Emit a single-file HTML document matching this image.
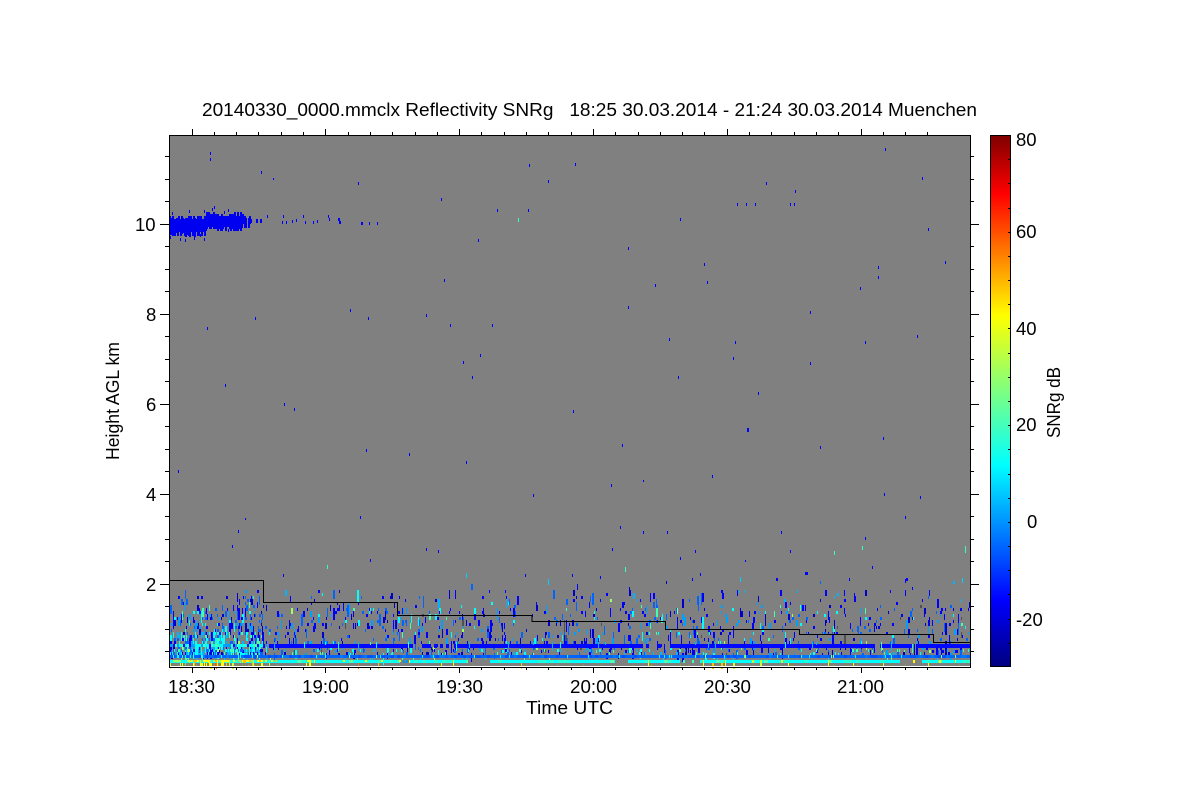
<!DOCTYPE html>
<html>
<head>
<meta charset="utf-8">
<title>20140330_0000.mmclx Reflectivity SNRg</title>
<style>
html,body{margin:0;padding:0;background:#fff;width:1200px;height:800px;overflow:hidden}
svg{display:block}
text{font-family:"Liberation Sans",sans-serif;font-size:18.5px;fill:#000;white-space:pre}
</style>
</head>
<body>
<svg id="s" xmlns="http://www.w3.org/2000/svg" width="1200" height="800" viewBox="0 0 1200 800">
<defs>
<linearGradient id="jet" x1="0" y1="1" x2="0" y2="0">
<stop offset="0" stop-color="#000080"/>
<stop offset="0.125" stop-color="#0000ff"/>
<stop offset="0.38" stop-color="#00ffff"/>
<stop offset="0.66" stop-color="#ffff00"/>
<stop offset="0.89" stop-color="#ff0000"/>
<stop offset="1" stop-color="#800000"/>
</linearGradient>
</defs>
<rect x="169" y="135" width="801" height="532" fill="#808080"/>
<g id="data" shape-rendering="crispEdges"></g>
<rect x="169" y="666" width="801" height="1" fill="#fff" shape-rendering="crispEdges"/>
<path d="M169 580.5H263.5V602.5H397.5V615.5H398M398 615.5H532V621.5H665.5V629.5H799.5V634.5H933.5V642.5H970" fill="none" stroke="#000" stroke-width="1" shape-rendering="crispEdges"/>
<g id="axes" shape-rendering="crispEdges"></g>
<rect x="990.5" y="135.5" width="20" height="531" fill="url(#jet)" stroke="#000" stroke-width="1" shape-rendering="crispEdges"/>
<g id="cb" shape-rendering="crispEdges"></g>

<text x="202" y="116" textLength="775" lengthAdjust="spacingAndGlyphs">20140330_0000.mmclx Reflectivity SNRg   18:25 30.03.2014 - 21:24 30.03.2014 Muenchen</text>

<text x="168" y="693" textLength="47" lengthAdjust="spacingAndGlyphs">18:30</text>
<text x="302" y="693" textLength="47" lengthAdjust="spacingAndGlyphs">19:00</text>
<text x="436" y="693" textLength="47" lengthAdjust="spacingAndGlyphs">19:30</text>
<text x="570" y="693" textLength="47" lengthAdjust="spacingAndGlyphs">20:00</text>
<text x="704" y="693" textLength="47" lengthAdjust="spacingAndGlyphs">20:30</text>
<text x="837" y="693" textLength="47" lengthAdjust="spacingAndGlyphs">21:00</text>
<text x="526" y="714" textLength="87" lengthAdjust="spacingAndGlyphs">Time UTC</text>

<text x="146" y="591">2</text>
<text x="146" y="501">4</text>
<text x="146" y="411">6</text>
<text x="146" y="321">8</text>
<text x="135" y="231">10</text>

<text x="1016" y="146">80</text>
<text x="1016" y="238">60</text>
<text x="1016" y="335">40</text>
<text x="1016" y="431">20</text>
<text x="1027" y="528">0</text>
<text x="1016" y="626">-20</text>

<text transform="translate(119 460) rotate(-90)" textLength="118" lengthAdjust="spacingAndGlyphs">Height AGL km</text>
<text transform="translate(1060 438) rotate(-90)" textLength="71" lengthAdjust="spacingAndGlyphs">SNRg dB</text>
</svg>
<script>
(function(){
var NS="http://www.w3.org/2000/svg",seed=12345;
function R(){seed=(seed*1664525+1013904223)>>>0;return seed/4294967296;}
var order=[],P={},L=0;
function layer(){L++;}
function add(c,x,y,w,h){
  x=Math.max(169,Math.round(x));w=Math.round(w)||1;
  if(x+w>970)w=970-x;if(w<=0)return;
  var k=L+"|"+c;
  if(!P[k]){P[k]="";order.push(k);}
  P[k]+="M"+x+" "+y+"h"+w+"v"+h+"h"+(-w)+"z";
}
function pick(t){var r=R(),a=0;for(var i=0;i<t.length;i++){a+=t[i][1];if(r<a)return t[i][0];}return t[0][0];}
var high=[["#0000ff",.42],["#0000c8",.2],["#0064ff",.2],["#00b4ff",.09],["#00ffff",.05],["#40ffb0",.03],["#a0ff60",.01]];
var mid=[["#0000ff",.34],["#0000c8",.16],["#0064ff",.22],["#00a0ff",.12],["#00ffff",.09],["#40ffb0",.04],["#a0ff60",.01],["#505050",.02]];
var lmid=[["#0000ff",.3],["#0000c8",.2],["#0064ff",.25],["#00a0ff",.15],["#00ffff",.08],["#40ffb0",.02]];
var dense=[["#00ffff",.26],["#0064ff",.22],["#0000ff",.16],["#00b4ff",.16],["#40ffb0",.12],["#0000c8",.06],["#a0ff60",.02]];

/* low-level speckle above the bands */
for(var x=170;x<970;x+=1.334){
  var left=x<263;
  for(var y=575;y<655;y+=3){
    var p;
    if(left){p=y>=642?.55:y>=630?.34:y>=612?.22:y>=596?.12:y>=588?.03:0;}
    else{p=y>=630?.1:y>=606?.085:y>=588?.04:.004;}
    if(x>263&&x<300&&y>=620)p*=1.4;
    if(R()<p){
      var h=3*(1+Math.floor(R()*R()*4));
      var w=R()<.4?2:1;
      var t=left?(y>=632?dense:lmid):(y<600?high:mid);
      add(pick(t),x,y,w,h);
    }
  }
}

/* rows around 650 */
layer();
for(x=169;x<970;x+=1.334){
  if(R()<(x<263?.5:.09))add(pick(dense),x,649,R()<.3?2:1,3);
  if(R()<(x<263?.5:.09))add(pick(dense),x,652,R()<.3?2:1,3);
}

/* band 1: blue */
layer();
[[273,410],[454,640],[671,875],[880,912],[917,970]].forEach(function(b){add("#0008ff",b[0],644,b[1]-b[0],4);});
for(x=410;x<453;x+=3)if(R()<.45)add("#0008ff",x,644,3,4);
for(x=640;x<671;x+=3)if(R()<.45)add("#0008ff",x,644,3,4);
for(x=263;x<273;x+=2)if(R()<.5)add("#0008ff",x,644,2,4);
for(x=169;x<263;x+=2)add(pick([["#00ffff",.45],["#40ffb0",.25],["#00a0ff",.2],["#0000ff",.1]]),x,644,2,3);
layer();
for(x=265;x<970;x+=1.334)if(R()<.04)add(pick([["#00b4ff",.5],["#00ffff",.3],["#40ffb0",.2]]),x,642,1,3+3*Math.floor(R()*3));

/* band 2: mid blue */
layer();
for(x=169;x<970;x+=3){
  add(pick([["#0064ff",.6],["#0050ff",.25],["#0078ff",.15]]),x,655,3,3);
}
layer();
for(x=169;x<970;x+=1.334)if(R()<(x<263?.3:.06))add(pick([["#00ffff",.5],["#40ffb0",.3],["#a0ff60",.2]]),x,655,1,3);

/* band 3: cyan */
layer();
[[169,400],[410,468],[490,615],[628,680],[700,900],[922,970]].forEach(function(b){
  for(var xx=b[0];xx<b[1];xx+=4){
    add(pick([["#00ffff",.7],["#20ffd8",.22],["#50ffb0",.08]]),xx,660,Math.min(4,b[1]-xx),3);
  }
});
for(x=680;x<700;x+=3)if(R()<.4)add("#40ffb0",x,660,2,3);
for(x=400;x<410;x+=3)if(R()<.4)add("#0096ff",x,660,2,3);
for(x=169;x<970;x+=1.334)if(R()<(x<400?.1:.04))add(pick([["#00c8ff",.5],["#40ffb0",.3],["#a0ff60",.2]]),x,658,1,2);

/* yellow / orange streaks at the bottom */
layer();
for(x=169;x<970;x+=1.334)if(R()<(x<263?.3:.06))add(R()<.5?"#a09050":"#909030",x,664,1,2);
for(x=169;x<400;x+=2)if(R()<(x<263?.5:.12))add(pick([["#ffff00",.5],["#a0ff60",.3],["#ffc000",.2]]),x,660,2,2);
for(x=169;x<970;x+=1.334){
  if(R()<(x<263?.3:.05)){
    add(pick([["#ffff00",.55],["#c8ff30",.25],["#ffc000",.12],["#ff7000",.08]]),x,R()<.5?660:663,R()<.25?2:1,R()<.5?6:3);
  }
}

/* ice cloud at 10 km: irregular columns */
layer();
var cc="#0000f0";
for(x=169;x<262;x+=1.334){
  var cy,up,dn,q;
  if(x<204){cy=226;up=7+Math.floor(R()*3)*1.5;dn=6+Math.floor(R()*3)*2;q=1;}
  else if(x<240){cy=222;up=6+Math.floor(R()*3)*2;dn=5+Math.floor(R()*3)*2;q=1;}
  else if(x<250){cy=221;up=3+Math.floor(R()*3)*2;dn=3+Math.floor(R()*3)*2;q=.7;}
  else{cy=221;up=2;dn=2;q=.22;}
  if(R()<q)add(cc,x,Math.round(cy-up),2,Math.round(up+dn));
  if(x<250&&R()<.16)add(cc,x,Math.round(cy-up-4-R()*5),1,3);
  if(x<235&&R()<.14)add(cc,x,Math.round(cy+dn+1+R()*2),1,3);
}

/* isolated echoes: x,y,h,w,colour */
var C="#0000ff",T="#00d0ff",G="#30ffc0",M="#0064ff";
[[210,152,3],[210,158,3],[261,171,3],[273,178,2],[358,182,3],[529,164,3],[575,163,3],[548,180,3],[441,198,3],[497,209,3],[518,218,4,1,G],[528,209,3],[680,218,3],[628,247,3],[478,239,3],[704,263,3],[707,281,3],[655,284,3],[444,279,3],[207,327,3],[255,317,3],[350,309,3],[368,317,3],[426,314,3],[450,324,3],[492,324,3],[669,338,3],[810,311,3],[860,287,3],[878,266,3],[878,276,3],[737,203,3],[746,203,3],[755,203,3],[766,182,3],[795,190,3],[790,203,3],[794,203,3],[885,148,3],[922,177,3],[928,228,3],[945,261,3],[865,341,3],[917,335,3],[735,341,3],[733,357,3],[810,362,3],[758,392,3],[678,376,3],[573,410,3],[622,444,3],[820,446,3],[747,428,4,2],[883,437,3],[225,384,3],[284,403,3],[294,408,3],[178,470,3],[366,449,3],[409,453,3],[466,461,3],[712,475,3],[611,484,3],[533,494,3],[884,493,3],[920,496,3],[905,516,3],[620,526,3],[643,531,3],[667,531,3],[360,516,3],[238,530,3],[232,545,3],[370,559,3],[426,548,3],[438,550,3],[781,531,3],[790,550,3],[805,572,3,3],[680,557,3],[695,550,3],[834,551,4,1,G],[862,546,4,1,G],[865,537,3],[872,566,3],[965,546,7,1,G],[327,565,4,1,G],[283,574,3],[480,354,3],[472,376,3],[628,306,3],[463,361,3],[245,518,2],[643,480,2],[612,548,3],[625,567,5,1,G],[525,574,3],[572,574,3],[600,576,3],[548,579,6,1,T],[466,573,5,1,T],[740,577,5,1,T],[962,578,5,1,T],[905,579,4],[700,573,3],[745,560,2],
/* 10 km tail */
[267,215,3],[283,215,3],[282,221,3],[286,221,3],[292,220,3],[296,219,3],[303,215,3],[305,221,3],[313,221,3],[317,220,3],[328,215,3],[329,218,3],[338,218,3,2],[339,221,3,2],[361,222,3,2],[369,222,3],[377,222,3]
].forEach(function(a){add(a[4]||C,a[0],a[1],a[3]||1,a[2]);});

var g=document.getElementById("data");
order.forEach(function(k){
  var p=document.createElementNS(NS,"path");
  p.setAttribute("fill",k.split("|")[1]);p.setAttribute("d",P[k]);g.appendChild(p);
});

/* axes */
var d="M169.5 135.5H970.5V667.5H169.5Z";
var i,xp,yp,len;
/* time ticks every 5 minutes; 18:30 = 191.5, 30 min = 133.8 px */
for(i=-1;i<34;i++){
  xp=Math.round(191.5+i*22.3)+.5;
  if(xp<170||xp>969)continue;
  len=((i%6)==0)?6:3;
  d+="M"+xp+" 667V"+(667+len)+"M"+xp+" 135V"+(135-len);
}
/* height ticks every 0.5 km; 10 km = 224, 2 km = 584 */
for(i=0;i<24;i++){
  yp=Math.round(584.5-(i-3)*22.5)+.5-1;
  if(yp<137||yp>665)continue;
  len=(((i-3)%4)==0)?9:4;
  d+="M169 "+yp+"H"+(169-len)+"M970 "+yp+"H"+(970+len);
}
var a=document.createElementNS(NS,"path");
a.setAttribute("d",d);a.setAttribute("fill","none");a.setAttribute("stroke","#000");a.setAttribute("stroke-width","1");
document.getElementById("axes").appendChild(a);
/* colour-bar ticks */
var e="";
for(i=1;i<22;i++){yp=Math.round(667-i*24.18)+.5;e+="M1008 "+yp+"H1011";}
var b=document.createElementNS(NS,"path");
b.setAttribute("d",e);b.setAttribute("fill","none");b.setAttribute("stroke","#000");b.setAttribute("stroke-width","1");
document.getElementById("cb").appendChild(b);
})();
</script>
</body>
</html>
